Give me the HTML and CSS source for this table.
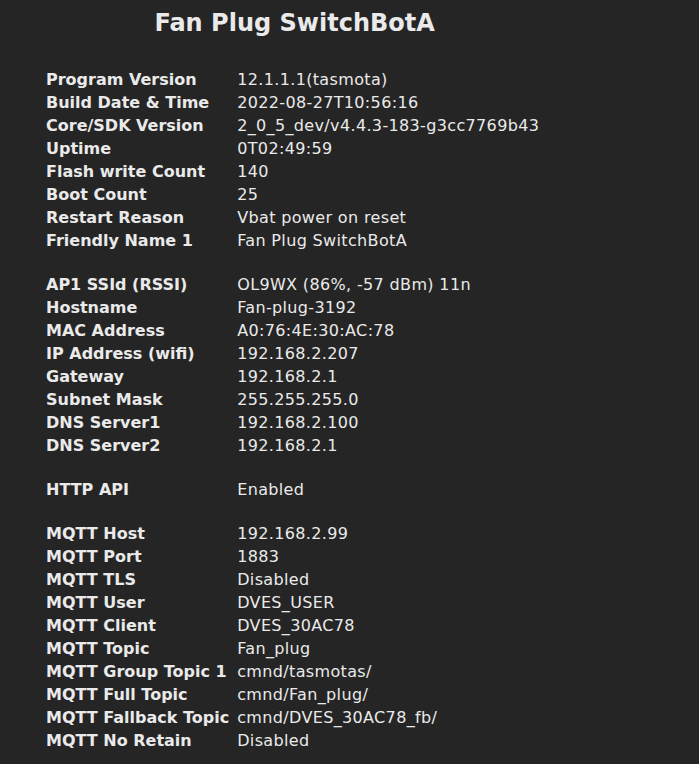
FILE: index.html
```html
<!DOCTYPE html>
<html>
<head>
<meta charset="utf-8">
<title>Fan Plug SwitchBotA - Information</title>
<link rel="stylesheet" href="styles.css">
</head>
<body>
<div class="page">
  <h2 class="title">Fan Plug SwitchBotA</h2>
  <table class="info">
    <tr><th>Program Version</th><td>12.1.1.1(tasmota)</td></tr>
    <tr><th>Build Date &amp; Time</th><td>2022-08-27T10:56:16</td></tr>
    <tr><th>Core/SDK Version</th><td>2_0_5_dev/v4.4.3-183-g3cc7769b43</td></tr>
    <tr><th>Uptime</th><td>0T02:49:59</td></tr>
    <tr><th>Flash write Count</th><td>140</td></tr>
    <tr><th>Boot Count</th><td>25</td></tr>
    <tr><th>Restart Reason</th><td>Vbat power on reset</td></tr>
    <tr><th>Friendly Name 1</th><td>Fan Plug SwitchBotA</td></tr>
    <tr class="gap"><th></th><td></td></tr>
    <tr><th>AP1 SSId (RSSI)</th><td>OL9WX (86%, -57 dBm) 11n</td></tr>
    <tr><th>Hostname</th><td>Fan-plug-3192</td></tr>
    <tr><th>MAC Address</th><td>A0:76:4E:30:AC:78</td></tr>
    <tr><th>IP Address (wifi)</th><td>192.168.2.207</td></tr>
    <tr><th>Gateway</th><td>192.168.2.1</td></tr>
    <tr><th>Subnet Mask</th><td>255.255.255.0</td></tr>
    <tr><th>DNS Server1</th><td>192.168.2.100</td></tr>
    <tr><th>DNS Server2</th><td>192.168.2.1</td></tr>
    <tr class="gap"><th></th><td></td></tr>
    <tr><th>HTTP API</th><td>Enabled</td></tr>
    <tr class="gap"><th></th><td></td></tr>
    <tr><th>MQTT Host</th><td>192.168.2.99</td></tr>
    <tr><th>MQTT Port</th><td>1883</td></tr>
    <tr><th>MQTT TLS</th><td>Disabled</td></tr>
    <tr><th>MQTT User</th><td>DVES_USER</td></tr>
    <tr><th>MQTT Client</th><td>DVES_30AC78</td></tr>
    <tr><th>MQTT Topic</th><td>Fan_plug</td></tr>
    <tr><th>MQTT Group Topic 1</th><td>cmnd/tasmotas/</td></tr>
    <tr><th>MQTT Full Topic</th><td>cmnd/Fan_plug/</td></tr>
    <tr><th>MQTT Fallback Topic</th><td>cmnd/DVES_30AC78_fb/</td></tr>
    <tr><th>MQTT No Retain</th><td>Disabled</td></tr>
  </table>
</div>
</body>
</html>
```
FILE: styles.css
```css
html, body {
  margin: 0;
  padding: 0;
  background: #252525;
}
body {
  color: #eaeaea;
  font-family: "DejaVu Sans", Verdana, sans-serif;
  font-size: 16px;
}
.page {
  display: inline-block;
  padding-left: 46px;
}
.title {
  margin: 8px 0 0;
  text-align: center;
  font-size: 24px;
  font-weight: bold;
  line-height: 30px;
  height: 60px;
}
.info {
  border-collapse: collapse;
}
.info th, .info td {
  padding: 0;
  height: 23px;
  line-height: 23px;
  white-space: nowrap;
  vertical-align: middle;
}
.info th {
  text-align: left;
  font-weight: bold;
  padding-right: 8px;
}
.info td {
  letter-spacing: 0.35px;
  padding-right: 4px;
}
.info .gap th, .info .gap td {
  height: 21px;
}
```
